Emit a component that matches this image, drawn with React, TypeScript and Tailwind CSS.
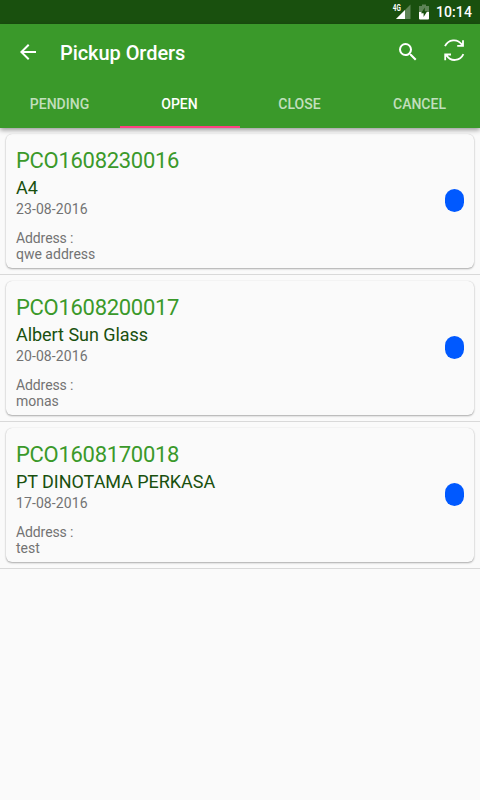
import * as React from "react";
import { MdArrowBack, MdSearch } from "react-icons/md";
import { clsx } from "clsx";

interface Order {
  code: string;
  customer: string;
  date: string;
  address: string;
}

const TABS = ["PENDING", "OPEN", "CLOSE", "CANCEL"];

const ORDERS: Order[] = [
  { code: "PCO1608230016", customer: "A4", date: "23-08-2016", address: "qwe address" },
  { code: "PCO1608200017", customer: "Albert Sun Glass", date: "20-08-2016", address: "monas" },
  { code: "PCO1608170018", customer: "PT DINOTAMA PERKASA", date: "17-08-2016", address: "test" },
];

function SignalIcon() {
  return (
    <svg width="20" height="18" viewBox="0 0 20 18">
      <path d="M18.5 1.5V16H4z" fill="#fff" fillOpacity="0.3" />
      <path d="M13 7v9H4z" fill="#fff" />
      <text x="0.8" y="7.8" fontSize="8.5" fontWeight="700" fill="#fff" textLength="8" lengthAdjust="spacingAndGlyphs">
        4G
      </text>
    </svg>
  );
}

function BatteryIcon() {
  return (
    <svg width="10" height="16" viewBox="0 0 10 16">
      <path d="M3 0.5h4V2h3v6H0V2h3z" fill="#fff" fillOpacity="0.3" />
      <path d="M0 8h10v6.5a1 1 0 0 1-1 1H1a1 1 0 0 1-1-1z" fill="#fff" />
      <path d="M5.8 3.5L2 9.2h2.6V13L8.2 7.2H5.8z" fill="#19500e" />
    </svg>
  );
}

function SyncIcon() {
  return (
    <svg width="22" height="22" viewBox="0 0 22 22" fill="none" stroke="#fff" strokeWidth="1.8">
      <path d="M2 7.2C5.3 0.2 14.5-0.8 18.9 5.6" />
      <path d="M20 1.2v5.6h-5.8" />
      <path d="M20 3.5v3.3h-3.3z" fill="#fff" stroke="none" />
      <path d="M20.4 15.2C17.1 22.2 7.9 23.2 3.5 16.2" />
      <path d="M2.2 21.2v-5.7h5.8" />
      <path d="M2.2 18.8v-3.3h3.3z" fill="#fff" stroke="none" />
    </svg>
  );
}

function OrderCard({ order }: { order: Order }) {
  return (
    <li className="border-b border-[#d9d9d9] p-1.5">
      <div className="flex h-[134px] justify-between rounded-md bg-[#fafafa] px-2.5 shadow-[0_1px_2px_rgba(0,0,0,0.32),0_0_1px_rgba(0,0,0,0.15)]">
        <div className="pt-3.5 text-sm leading-4 text-[#737373]">
          <h2 className="text-[22px] leading-[26px] tracking-[-0.3px] text-[#3a992a]">{order.code}</h2>
          <p className="mt-[3px] text-lg leading-[21px] tracking-[-0.04px] text-[#19500e]">{order.customer}</p>
          <p className="mt-[3px] tracking-[0.1px]">{order.date}</p>
          <p className="mt-[13px] tracking-[-0.1px]">Address :</p>
          <p>{order.address}</p>
        </div>
        <span className="mt-[55px] h-[23px] w-[19px] rounded-[9.5px] bg-[#0059ff]" />
      </div>
    </li>
  );
}

export default function App() {
  const [activeTab, setActiveTab] = React.useState("OPEN");

  return (
    <div className="h-[800px] w-[480px] overflow-hidden bg-[#fafafa] font-['Roboto',sans-serif]">
      {/* Status bar */}
      <div className="flex h-6 items-center justify-end bg-[#19500e] pr-2 text-white">
        <SignalIcon />
        <span className="mb-px ml-[7px]">
          <BatteryIcon />
        </span>
        <span className="ml-[7px] text-sm font-medium tracking-[0.1px]">10:14</span>
      </div>

      {/* Toolbar and tabs */}
      <header className="relative bg-[#3a992a] text-white shadow-[0_2px_5px_rgba(0,0,0,0.4)]">
        <div className="flex h-14 items-center px-4">
          <MdArrowBack size={24} />
          <h1 className="ml-5 flex-1 pt-0.5 text-xl font-medium tracking-[-0.06px]">Pickup Orders</h1>
          <MdSearch size={24} />
          <span className="mr-[-1px] mb-[5px] ml-[23px]">
            <SyncIcon />
          </span>
        </div>
        <nav className="grid h-12 grid-cols-4">
          {TABS.map((tab) => (
            <button
              key={tab}
              type="button"
              onClick={() => setActiveTab(tab)}
              className={clsx(
                "border-b-2 pt-0.5 pr-px text-sm font-medium",
                tab === activeTab ? "border-[#ff4081] text-white" : "border-transparent text-white/70"
              )}
            >
              {tab}
            </button>
          ))}
        </nav>
      </header>

      <ul>
        {ORDERS.map((order) => (
          <OrderCard key={order.code} order={order} />
        ))}
      </ul>
    </div>
  );
}
